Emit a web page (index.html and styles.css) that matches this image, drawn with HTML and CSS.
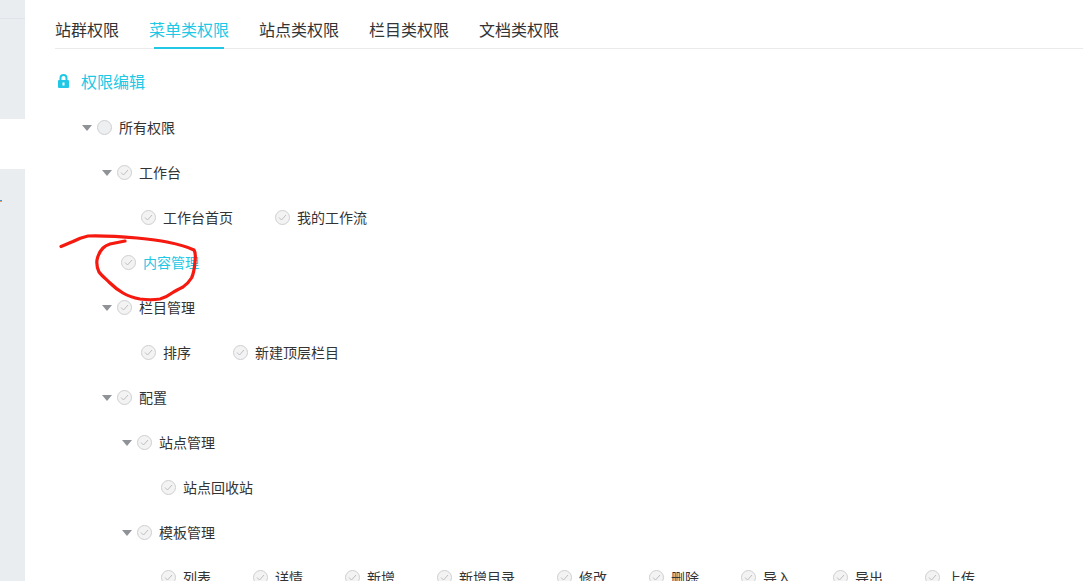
FILE: index.html
```html
<!DOCTYPE html>
<html lang="zh">
<head>
<meta charset="utf-8">
<title>权限编辑</title>
<link rel="stylesheet" href="styles.css">
</head>
<body>
<div class="page">
  <aside class="side">
    <div class="side-top"></div>
    <div class="side-gap"></div>
    <div class="side-rest"><i class="side-mark"></i></div>
  </aside>
  <main class="main">
    <nav class="tabs">
      <a class="tab">站群权限</a>
      <a class="tab active">菜单类权限</a>
      <a class="tab">站点类权限</a>
      <a class="tab">栏目类权限</a>
      <a class="tab">文档类权限</a>
    </nav>
    <h2 class="title">
      <svg class="lock" viewBox="0 0 11 14" width="11" height="14"><path fill="#21c8e6" d="M1.500 6V4a4 4 0 0 1 8 0v2h.5a1 1 0 0 1 1 1v6a1 1 0 0 1-1 1H1a1 1 0 0 1-1-1V7a1 1 0 0 1 1-1h.5zm2 0h4V4a2 2 0 0 0-4 0v2z"/><rect x="4.500" y="8.500" width="2" height="3" fill="#fff"/></svg>
      <span>权限编辑</span>
    </h2>
    <div class="tree">
      <div class="row l0"><i class="arrow"></i><i class="box blank"></i><span class="label">所有权限</span></div>
      <div class="row l1"><i class="arrow"></i><i class="box"><svg viewBox="0 0 13 13"><path d="M3 6.500l2.500 2.500 4.500-5"/></svg></i><span class="label">工作台</span></div>
      <div class="row l2">
        <span class="leaf w134"><i class="box"><svg viewBox="0 0 13 13"><path d="M3 6.500l2.500 2.500 4.500-5"/></svg></i><span class="label">工作台首页</span></span>
        <span class="leaf"><i class="box"><svg viewBox="0 0 13 13"><path d="M3 6.500l2.500 2.500 4.500-5"/></svg></i><span class="label">我的工作流</span></span>
      </div>
      <div class="row l1b"><i class="box"><svg viewBox="0 0 13 13"><path d="M3 6.500l2.500 2.500 4.500-5"/></svg></i><span class="label link">内容管理</span></div>
      <div class="row l1"><i class="arrow"></i><i class="box"><svg viewBox="0 0 13 13"><path d="M3 6.500l2.500 2.500 4.500-5"/></svg></i><span class="label">栏目管理</span></div>
      <div class="row l2">
        <span class="leaf w92"><i class="box"><svg viewBox="0 0 13 13"><path d="M3 6.500l2.500 2.500 4.500-5"/></svg></i><span class="label">排序</span></span>
        <span class="leaf"><i class="box"><svg viewBox="0 0 13 13"><path d="M3 6.500l2.500 2.500 4.500-5"/></svg></i><span class="label">新建顶层栏目</span></span>
      </div>
      <div class="row l1"><i class="arrow"></i><i class="box"><svg viewBox="0 0 13 13"><path d="M3 6.500l2.500 2.500 4.500-5"/></svg></i><span class="label">配置</span></div>
      <div class="row l3"><i class="arrow"></i><i class="box"><svg viewBox="0 0 13 13"><path d="M3 6.500l2.500 2.500 4.500-5"/></svg></i><span class="label">站点管理</span></div>
      <div class="row l4"><span class="leaf"><i class="box"><svg viewBox="0 0 13 13"><path d="M3 6.500l2.500 2.500 4.500-5"/></svg></i><span class="label">站点回收站</span></span></div>
      <div class="row l3"><i class="arrow"></i><i class="box"><svg viewBox="0 0 13 13"><path d="M3 6.500l2.500 2.500 4.500-5"/></svg></i><span class="label">模板管理</span></div>
      <div class="row l4">
        <span class="leaf w92"><i class="box"><svg viewBox="0 0 13 13"><path d="M3 6.500l2.500 2.500 4.500-5"/></svg></i><span class="label">列表</span></span>
        <span class="leaf w92"><i class="box"><svg viewBox="0 0 13 13"><path d="M3 6.500l2.500 2.500 4.500-5"/></svg></i><span class="label">详情</span></span>
        <span class="leaf w92"><i class="box"><svg viewBox="0 0 13 13"><path d="M3 6.500l2.500 2.500 4.500-5"/></svg></i><span class="label">新增</span></span>
        <span class="leaf w120"><i class="box"><svg viewBox="0 0 13 13"><path d="M3 6.500l2.500 2.500 4.500-5"/></svg></i><span class="label">新增目录</span></span>
        <span class="leaf w92"><i class="box"><svg viewBox="0 0 13 13"><path d="M3 6.500l2.500 2.500 4.500-5"/></svg></i><span class="label">修改</span></span>
        <span class="leaf w92"><i class="box"><svg viewBox="0 0 13 13"><path d="M3 6.500l2.500 2.500 4.500-5"/></svg></i><span class="label">删除</span></span>
        <span class="leaf w92"><i class="box"><svg viewBox="0 0 13 13"><path d="M3 6.500l2.500 2.500 4.500-5"/></svg></i><span class="label">导入</span></span>
        <span class="leaf w92"><i class="box"><svg viewBox="0 0 13 13"><path d="M3 6.500l2.500 2.500 4.500-5"/></svg></i><span class="label">导出</span></span>
        <span class="leaf w92"><i class="box"><svg viewBox="0 0 13 13"><path d="M3 6.500l2.500 2.500 4.500-5"/></svg></i><span class="label">上传</span></span>
      </div>
    </div>
  </main>
  <svg class="scribble" viewBox="0 0 1083 581" width="1083" height="581"><path d="M61 246.500C65 245 69 243 73 241.500C78 239 83 237 88 236C105 235.500 120 236.500 137 238C148 239 158 240 167 242C177 244 188 247 194 250C196 253 195.500 257 195 262C194.500 268 193.500 274 191.500 278C189 282 186 285 183 287C179 289 175 291 172 293C168 296 164 298 160 299C154 300 147 300 140 299C134 298 128 296 123 293C118 290 114 287 110 283C106 279 102 276 99 272C97 268 96.500 264 97 260C98 255 100 251 103 248C105 246 107 245 110 244C115 243 120 242 125 241"/></svg>
</div>
</body>
</html>
```
FILE: styles.css
```css
* { box-sizing: border-box; }
html, body { margin: 0; height: 100%; overflow: hidden; background: #fff; }
body { font-family: "Noto Sans CJK SC", "Liberation Sans", sans-serif; color: #333; }
.page { position: relative; display: flex; width: 1083px; height: 581px; overflow: hidden; }
.side { width: 25px; flex: none; display: flex; flex-direction: column; }
.side-top { height: 119px; background: linear-gradient(#e9edf0 18px, #dfe5ea 18px, #dfe5ea 19px, #e9edf0 19px); }
.side-gap { height: 50px; background: #fff; }
.side-rest { flex: 1; background: #e9edf0; position: relative; }
.side-mark { position: absolute; left: 0; top: 31px; width: 2px; height: 2px; background: linear-gradient(#4f8fd0 50%, #e0a060 50%); }
.main { flex: 1; padding-left: 30px; min-width: 0; }
.tabs { display: flex; gap: 30px; height: 49px; border-bottom: 1px solid #e8eaec; padding-top: 17px; }
.tab { position: relative; font-size: 16px; line-height: 24px; color: #333; height: 30px; }
.tab.active { color: #21c8e6; }
.tab.active::after { content: ""; position: absolute; left: 5px; right: 5px; top: 30px; height: 2px; background: #21c8e6; }
.title { display: flex; align-items: center; margin: 0; height: 64px; padding-left: 3px; font-size: 16px; font-weight: 400; color: #21c8e6; }
.title span { margin-left: 12px; }
.lock { flex: none; }
.tree { margin-top: -8px; }
.row { display: flex; align-items: center; height: 45px; font-size: 14px; white-space: nowrap; color: #333; }
.l0 { padding-left: 27px; }
.l1 { padding-left: 47px; }
.l1b { padding-left: 66px; }
.l2 { padding-left: 86px; }
.l3 { padding-left: 67px; }
.l4 { padding-left: 106px; }
.arrow { flex: none; width: 0; height: 0; margin-right: 5px; border-left: 5px solid transparent; border-right: 5px solid transparent; border-top: 6px solid #8f9296; }
.box { flex: none; width: 15px; height: 15px; border-radius: 50%; border: 1px solid #cdcfd2; background: #f3f3f4; display: flex; }
.box svg { width: 100%; height: 100%; fill: none; stroke: #bcbec1; stroke-width: 1; }
.box.blank { background: #eeeff1; }
.label { margin-left: 7px; line-height: 20px; padding-bottom: 2px; box-sizing: content-box; }
.link { color: #21c8e6; }
.leaf { display: inline-flex; align-items: center; }
.w134 { width: 134px; }
.w92 { width: 92px; }
.w120 { width: 120px; }
.scribble { position: absolute; left: 0; top: 0; pointer-events: none; fill: none; stroke: #f5190f; stroke-width: 3.2; stroke-linecap: round; stroke-linejoin: round; }
```
